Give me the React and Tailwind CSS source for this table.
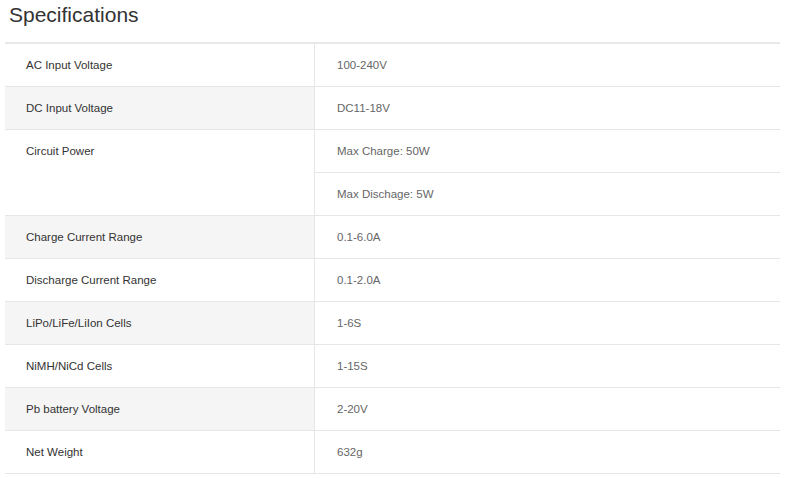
import React from "react";

const specs = [
  { label: "AC Input Voltage", values: ["100-240V"] },
  { label: "DC Input Voltage", values: ["DC11-18V"], shaded: true },
  { label: "Circuit Power", values: ["Max Charge: 50W", "Max Dischage: 5W"] },
  { label: "Charge Current Range", values: ["0.1-6.0A"], shaded: true },
  { label: "Discharge Current Range", values: ["0.1-2.0A"] },
  { label: "LiPo/LiFe/LiIon Cells", values: ["1-6S"], shaded: true },
  { label: "NiMH/NiCd Cells", values: ["1-15S"] },
  { label: "Pb battery Voltage", values: ["2-20V"], shaded: true },
  { label: "Net Weight", values: ["632g"] },
];

const App = () => {
  return (
    <div className="w-[800px] h-[478px] bg-white font-['Liberation_Sans',Arial,sans-serif] overflow-hidden">
      <h2 className="pl-[9px] pt-[3px] text-[21px] leading-[24px] text-[#333] font-normal">Specifications</h2>

      <div className="mt-[15px] ml-[5px] w-[775px] border-t-2 border-[#e8e8e8] grid grid-cols-[310px_465px] text-[11.5px]">
        {specs.map((row) => (
          <React.Fragment key={row.label}>
            <div
              className={`border-b border-r border-[#e6e6e6] pl-[21px] leading-[42px] text-[#333] ${
                row.values.length > 1 ? "row-span-2" : ""
              } ${row.shaded ? "bg-[#f5f5f5]" : "bg-white"}`}
            >
              {row.label}
            </div>
            {row.values.map((v) => (
              <div key={v} className="h-[43px] border-b border-[#e6e6e6] pl-[22px] leading-[42px] text-[#666]">
                {v}
              </div>
            ))}
          </React.Fragment>
        ))}
      </div>
    </div>
  );
};

export default App;
